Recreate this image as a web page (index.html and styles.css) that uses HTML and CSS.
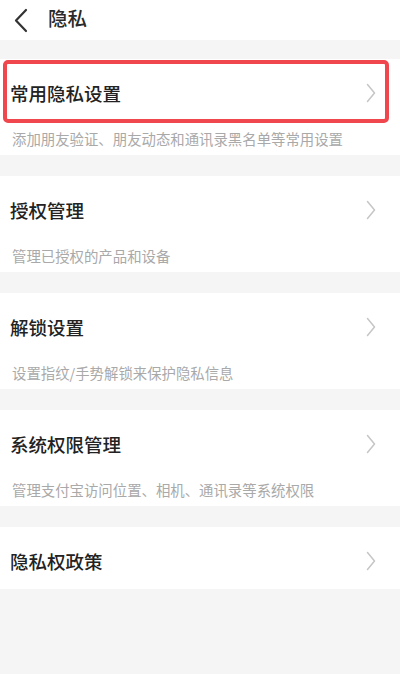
FILE: index.html
```html
<!DOCTYPE html>
<html lang="zh-CN">
<head>
<meta charset="utf-8">
<title>隐私</title>
<link rel="stylesheet" href="styles.css">
</head>
<body>
<div class="page">
  <header class="topbar">
    <svg class="back" width="16" height="26" viewBox="0 0 16 26"><path d="M12 3 L2 13.5 L12 24" fill="none" stroke="#333" stroke-width="2.2" stroke-linecap="round" stroke-linejoin="round"/></svg>
    <span class="topbar-title">隐私</span>
  </header>
  <main class="list">
    <section class="group">
      <div class="row highlighted">
        <span class="row-title">常用隐私设置</span>
        <svg class="chev" width="10" height="20" viewBox="0 0 10 20"><path d="M1.5 1.5 L8.5 10 L1.5 18.5" fill="none" stroke="#c6c6c6" stroke-width="1.5" stroke-linecap="round" stroke-linejoin="round"/></svg>
        <div class="mark"></div>
      </div>
      <p class="desc">添加朋友验证、朋友动态和通讯录黑名单等常用设置</p>
    </section>
    <section class="group">
      <div class="row">
        <span class="row-title">授权管理</span>
        <svg class="chev" width="10" height="20" viewBox="0 0 10 20"><path d="M1.5 1.5 L8.5 10 L1.5 18.5" fill="none" stroke="#c6c6c6" stroke-width="1.5" stroke-linecap="round" stroke-linejoin="round"/></svg>
      </div>
      <p class="desc">管理已授权的产品和设备</p>
    </section>
    <section class="group">
      <div class="row">
        <span class="row-title">解锁设置</span>
        <svg class="chev" width="10" height="20" viewBox="0 0 10 20"><path d="M1.5 1.5 L8.5 10 L1.5 18.5" fill="none" stroke="#c6c6c6" stroke-width="1.5" stroke-linecap="round" stroke-linejoin="round"/></svg>
      </div>
      <p class="desc">设置指纹/手势解锁来保护隐私信息</p>
    </section>
    <section class="group">
      <div class="row">
        <span class="row-title">系统权限管理</span>
        <svg class="chev" width="10" height="20" viewBox="0 0 10 20"><path d="M1.5 1.5 L8.5 10 L1.5 18.5" fill="none" stroke="#c6c6c6" stroke-width="1.5" stroke-linecap="round" stroke-linejoin="round"/></svg>
      </div>
      <p class="desc">管理支付宝访问位置、相机、通讯录等系统权限</p>
    </section>
    <section class="group">
      <div class="row">
        <span class="row-title">隐私权政策</span>
        <svg class="chev" width="10" height="20" viewBox="0 0 10 20"><path d="M1.5 1.5 L8.5 10 L1.5 18.5" fill="none" stroke="#c6c6c6" stroke-width="1.5" stroke-linecap="round" stroke-linejoin="round"/></svg>
      </div>
    </section>
  </main>
</div>
</body>
</html>
```

FILE: styles.css
```css
* { box-sizing: border-box; }
html, body {
  margin: 0;
  padding: 0;
  background: #f5f5f5;
  font-family: "Noto Sans CJK SC", "Noto Sans", sans-serif;
}
.page {
  width: 400px;
  min-height: 674px;
  background: #f5f5f5;
}
.topbar {
  height: 40px;
  background: #fff;
  display: flex;
  align-items: center;
  padding-left: 14px;
  gap: 18px;
}
.back { display: block; }
.topbar-title {
  font-size: 19.5px;
  line-height: 22px;
  font-weight: 500;
  color: #2a2a2a;
  margin-top: -4px;
}
.list {
  display: flex;
  flex-direction: column;
  gap: 21px;
  padding-top: 19px;
}
.group {
  background: #fff;
}
.row {
  position: relative;
  display: flex;
  align-items: center;
  justify-content: space-between;
  height: 62px;
  padding: 6px 24px 0 10px;
}
.row-title {
  font-size: 18.5px;
  line-height: 22px;
  font-weight: 500;
  color: #222;
}
.chev { display: block; }
.mark {
  position: absolute;
  left: 3px;
  top: 1px;
  width: 386px;
  height: 63px;
  border: 4px solid #f0464e;
  border-radius: 5px;
}
.desc {
  margin: 0;
  padding: 9px 0 7px 12px;
  font-size: 14.4px;
  line-height: 18px;
  color: #a9a9a9;
}
```
